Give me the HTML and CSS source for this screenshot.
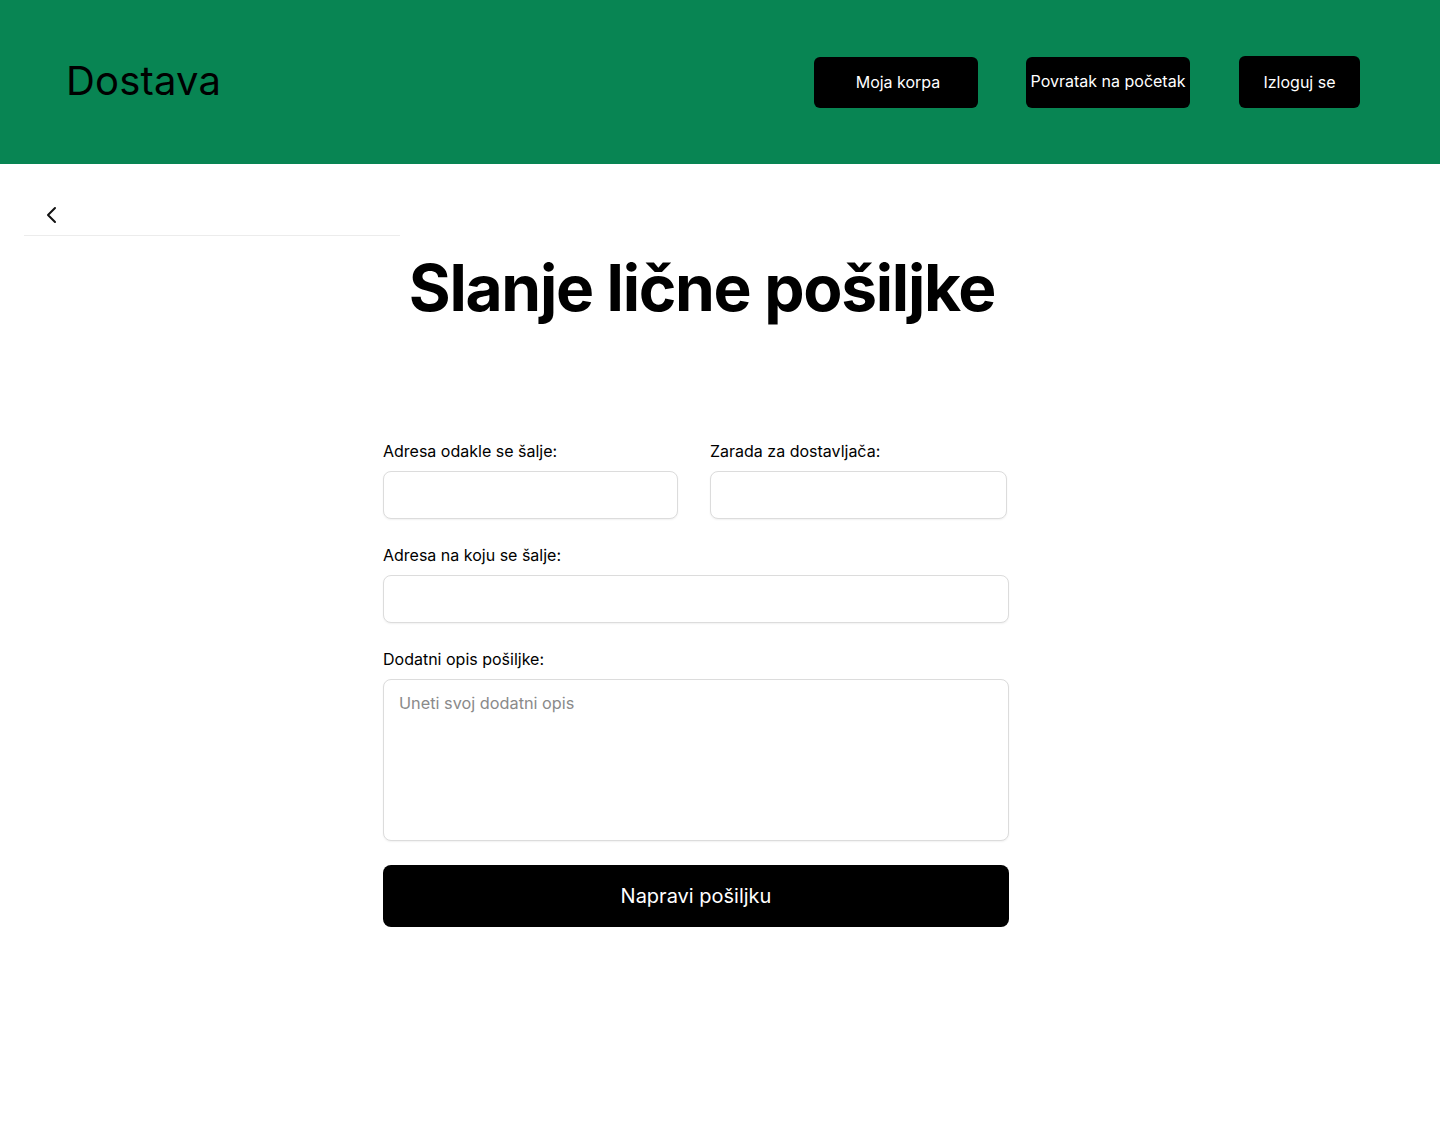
FILE: index.html
```html
<!DOCTYPE html>
<html lang="sr">
<head>
<meta charset="utf-8">
<title>Dostava</title>
<link rel="stylesheet" href="styles.css">
</head>
<body>
<header class="topbar">
  <div class="brand">Dostava</div>
  <nav class="nav">
    <a class="nav-btn btn-cart" href="#">Moja korpa</a>
    <a class="nav-btn btn-home" href="#">Povratak na početak</a>
    <a class="nav-btn btn-out" href="#">Izloguj se</a>
  </nav>
</header>
<main class="page">
  <div class="backbar">
    <a class="back" href="#" aria-label="Nazad">
      <svg width="24" height="24" viewBox="0 0 24 24" fill="none" stroke="#111" stroke-width="2" stroke-linecap="round" stroke-linejoin="round"><path d="M15 5l-7 7 7 7"/></svg>
    </a>
  </div>
  <h1 class="title">Slanje lične pošiljke</h1>
  <form class="form">
    <div class="row">
      <div class="field field-a">
        <label class="label">Adresa odakle se šalje:</label>
        <input class="input" type="text">
      </div>
      <div class="field field-b">
        <label class="label">Zarada za dostavljača:</label>
        <input class="input" type="text">
      </div>
    </div>
    <div class="field">
      <label class="label">Adresa na koju se šalje:</label>
      <input class="input" type="text">
    </div>
    <div class="field">
      <label class="label">Dodatni opis pošiljke:</label>
      <textarea class="textarea" placeholder="Uneti svoj dodatni opis"></textarea>
    </div>
    <button class="submit" type="button">Napravi pošiljku</button>
  </form>
</main>
</body>
</html>
```

FILE: styles.css
```css
* { box-sizing: border-box; }
body {
  margin: 0;
  font-family: Inter, "Noto Sans", sans-serif;
  color: #000;
  background: #fff;
}
.topbar {
  height: 164px;
  background: #088553;
  display: flex;
  align-items: center;
  justify-content: space-between;
  padding: 0 80px 0 66px;
}
.brand {
  font-size: 40px;
  font-weight: 400;
  color: #000;
  letter-spacing: 0.2px;
  margin-top: -4px;
}
.nav {
  display: flex;
  align-items: center;
}
.nav-btn {
  display: flex;
  align-items: center;
  justify-content: center;
  background: #000;
  color: #fff;
  text-decoration: none;
  font-size: 16px;
  border-radius: 6px;
  height: 51px;
}
.btn-cart { width: 164px; margin-right: 48px; padding-left: 4px; padding-bottom: 1px; }
.btn-home { width: 164px; margin-right: 49px; padding-bottom: 2px; }
.btn-out { width: 121px; height: 52px; margin-top: -1px; padding-top: 1px; }
.page {
  display: flex;
  flex-direction: column;
  align-items: center;
  padding-right: 48px;
}
.backbar {
  align-self: flex-start;
  width: 376px;
  margin-left: 24px;
  height: 72px;
  border-bottom: 1px solid #ececec;
  display: flex;
  align-items: flex-end;
  padding-left: 16px;
  padding-bottom: 8px;
}
.back { display: flex; }
.title {
  margin: 12px 0 0 12px;
  font-size: 64px;
  font-weight: 700;
  letter-spacing: -1.3px;
  line-height: 80px;
}
.form {
  width: 626px;
  margin-top: 113px;
  display: flex;
  flex-direction: column;
}
.row {
  display: flex;
  gap: 32px;
}
.field {
  display: flex;
  flex-direction: column;
  margin-bottom: 26px;
}
.field-a { width: 295px; }
.field-b { width: 297px; }
.label {
  font-size: 16px;
  line-height: 20px;
  margin-bottom: 10px;
}
.input, .textarea {
  border: 1px solid #dcdcdc;
  border-radius: 8px;
  box-shadow: 0 1px 2px rgba(0,0,0,0.06);
  font-family: Inter, "Noto Sans", sans-serif;
  font-size: 16px;
  outline: none;
  background: #fff;
}
.input { height: 48px; padding: 0 16px; }
.textarea {
  height: 162px;
  padding: 13px 15px;
  resize: none;
  font-size: 16.3px;
  line-height: 20px;
}
.textarea::placeholder { color: #8a8a8a; }
.submit {
  margin-top: -2px;
  height: 62px;
  background: #000;
  color: #fff;
  border: none;
  border-radius: 8px;
  font-family: Inter, "Noto Sans", sans-serif;
  font-size: 20px;
}
```
